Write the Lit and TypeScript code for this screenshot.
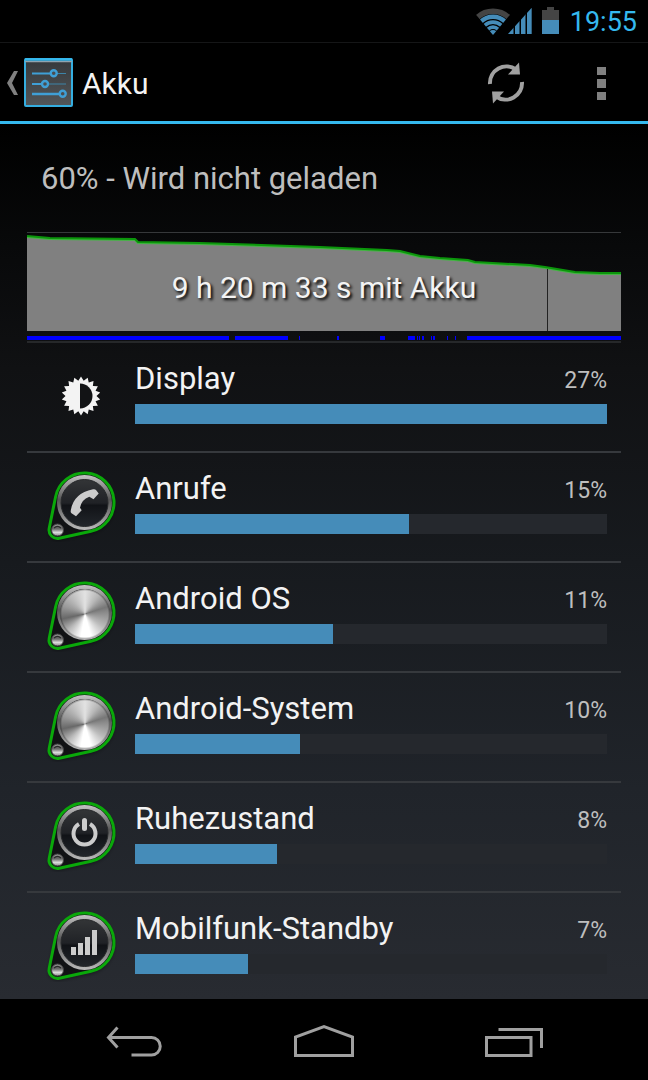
import { LitElement, html, css, svg } from "lit";
import { customElement } from "lit/decorators.js";
import { styleMap } from "lit/directives/style-map.js";

type Glyph = "brightness" | "phone" | "metal" | "power" | "signal";
interface Usage { name: string; percent: number; bar: number; glyph: Glyph }

const USAGE: Usage[] = [
  { name: "Display", percent: 27, bar: 100, glyph: "brightness" },
  { name: "Anrufe", percent: 15, bar: 58, glyph: "phone" },
  { name: "Android OS", percent: 11, bar: 42, glyph: "metal" },
  { name: "Android-System", percent: 10, bar: 35, glyph: "metal" },
  { name: "Ruhezustand", percent: 8, bar: 30, glyph: "power" },
  { name: "Mobilfunk-Standby", percent: 7, bar: 24, glyph: "signal" },
];

// Start and length of each stretch of time the device was awake.
const AWAKE: [number, number][] = [
  [0, 202], [208, 53], [272, 1], [310, 2], [353, 5], [381, 7], [390, 1], [392, 1],
  [395, 2], [404, 1], [406, 2], [420, 1], [428, 1], [440, 154],
];

const LEVEL = "0,3 23,5 108,6 111,9 173,10 293,14 360,17 373,18 393,23 413,25 441,27 448,29 503,32 518,34 548,39 573,40 594,40";

const spikes = (count: number, outer: number, inner: number) =>
  Array.from({ length: count * 2 }, (_, i) => {
    const r = i % 2 ? inner : outer;
    const a = (i * Math.PI) / count;
    return `${(36 + r * Math.sin(a)).toFixed(2)},${(36 - r * Math.cos(a)).toFixed(2)}`;
  }).join(" ");

@customElement("usage-icon")
export class UsageIcon extends LitElement {
  static properties = { glyph: {} };
  declare glyph: Glyph;
  static styles = css`
    :host { display: block; width: 72px; height: 72px; }
    svg { display: block; }
    .metal {
      width: 50px; height: 50px; border-radius: 50%;
      background:
        radial-gradient(circle, transparent 65%, #0006 71%),
        conic-gradient(#e2e2e2, #b8b8b8 35deg, #777 72deg, #8a8a8a 85deg, #bbb 125deg, #fff 165deg, #fff 190deg, #bbb 225deg, #686868 258deg, #999 290deg, #bbb 320deg, #e2e2e2);
    }
  `;
  private face() {
    switch (this.glyph) {
      case "phone":
        return svg`<path fill="#ccc" d="M48 19.300Q50 18.800 51 20L53.700 23.500 48.500 29.300 44.300 26.700Q36.500 29.500 35 37.700L36.700 40.300 31 46.300 26.500 43.300Q25.500 42.500 25.700 41Q28 23.500 48 19.300Z"/>`;
      case "power":
        return svg`<g fill="none" stroke="#ccc" stroke-width="4"><path d="M34 24a11 11 0 1 0 11 0"/><path stroke-width="5" stroke-linecap="round" d="M39.500 20.500v8"/></g>`;
      case "signal":
        return svg`<path fill="#ccc" d="M26 37h5v8h-5zM33 33h5v12h-5zM40 27h5v18h-5zM47 20h5v25h-5z"/>`;
      default:
        return svg`<foreignObject x="14.500" y="8.500" width="50" height="50"><div class="metal"></div></foreignObject>`;
    }
  }
  render() {
    if (this.glyph === "brightness") {
      return html`<svg width="72" height="72" viewBox="0 0 72 72" aria-hidden="true">
        <polygon fill="#f3f3f3" points=${spikes(18, 19.5, 15.5)}></polygon>
        <path fill="#121315" d="M35 23.500a12.500 12.500 0 0 1 0 25z"/>
      </svg>`;
    }
    return html`<svg width="72" height="72" viewBox="0 0 72 72" aria-hidden="true">
      <defs>
        <linearGradient id="rim" x1="0" y1="0" x2="0" y2="1">
          <stop offset="0" stop-color="#c4c4c4"/><stop offset=".45" stop-color="#555"/>
          <stop offset=".6" stop-color="#707070"/><stop offset="1" stop-color="#bbb"/>
        </linearGradient>
        <linearGradient id="face" x1="0" y1="0" x2="0" y2="1">
          <stop offset="0" stop-color="#333537"/><stop offset=".5" stop-color="#202226"/>
          <stop offset=".55" stop-color="#111317"/><stop offset="1" stop-color="#22262b"/>
        </linearGradient>
        <linearGradient id="led" x1="0" y1="0" x2="0" y2="1">
          <stop offset="0" stop-color="#999"/><stop offset=".4" stop-color="#666"/>
          <stop offset=".7" stop-color="#ddd"/><stop offset="1" stop-color="#888"/>
        </linearGradient>
        <filter id="soft" x="-20%" y="-20%" width="140%" height="140%"><feGaussianBlur stdDeviation="2"/></filter>
      </defs>
      <path d="M4.200 60L10.600 28.700A29.500 29.500 0 1 1 45.900 63.300L14.300 70A8.500 8.500 0 0 1 4.200 60Z" fill="#0008" filter="url(#soft)"/>
      <path d="M4.200 58.300L10.600 26.700A29.500 29.500 0 1 1 45.900 61.300L14.300 68.300A8.500 8.500 0 0 1 4.200 58.300Z" fill="#111214" stroke="#0aa80a" stroke-width="3"/>
      <circle cx="39.500" cy="32.500" r="27.500" fill="url(#rim)"/>
      <circle cx="39.500" cy="33" r="23.500" fill="url(#face)" stroke="#26282a"/>
      ${this.face()}
      <circle cx="12.500" cy="60" r="6" fill="url(#led)" stroke="#444"/>
      <path d="M9 58q3.500-3 7 0" fill="none" stroke="#2c2c2c" stroke-width="1.500"/>
    </svg>`;
  }
}

@customElement("app-root")
export class AppRoot extends LitElement {
  static styles = css`
    :host {
      display: flex; flex-direction: column; height: 100vh; overflow: hidden;
      font-family: Roboto, "Noto Sans", sans-serif; color: #f3f3f3; background: #000;
    }
    * { box-sizing: border-box; }
    svg { display: block; }
    button { background: none; border: 0; padding: 0; margin: 0; color: inherit; font: inherit; display: flex; align-items: center; justify-content: center; }
    .status { flex: none; height: 43px; display: flex; align-items: center; justify-content: flex-end; padding-right: 11px; gap: 10px; border-bottom: 1px solid #151617; }
    .time { font-size: 27px; line-height: 42px; padding-top: 2px; color: #35b9ee; }
    .bar { flex: none; height: 81px; display: flex; align-items: center; border-bottom: 3px solid #35b9ee; }
    .up { gap: 5px; padding-left: 6px; }
    h1 { margin: 0 0 0 9px; flex: 1; padding-top: 4px; font-size: 30px; line-height: 40px; font-weight: 400; }
    .action { width: 94px; height: 78px; }
    main { flex: 1; min-height: 0; overflow: hidden; padding: 0 27px; background: linear-gradient(#000 0, #08090a 14%, #101113 28%, #171a1e 50%, #20242a 76%, #282b31 100%); }
    .summary { margin: 0; padding: 35px 14px 33px; font-size: 31px; line-height: 40px; color: #bebebe; }
    .history { display: grid; border-top: 1px solid #36383a; border-bottom: 2px solid #26282a; height: 111px; }
    .history > * { grid-area: 1 / 1; }
    .plot { width: 100%; height: 108px; }
    .caption { align-self: start; justify-self: center; margin: 0; padding-top: 35px; font-size: 30px; line-height: 40px; text-shadow: 2px 2px 3px #000; }
    ul { margin: 0; padding: 0; list-style: none; }
    li { display: flex; height: 110px; padding: 17px 14px 0 18px; border-bottom: 2px solid #36393d; }
    .body { flex: 1; margin-left: 18px; }
    .line { display: flex; justify-content: space-between; height: 44px; }
    .name { font-size: 31px; line-height: 38px; }
    .pct { font-size: 23px; line-height: 42px; color: #bebebe; }
    .track { height: 20px; background: #25282d; }
    .fill { height: 20px; background: #458cb9; }
    nav { flex: none; height: 81px; display: flex; padding: 5px 39px 0; background: #000; }
    nav button { flex: 1; }
  `;
  private statusIcons() {
    return html`<svg width="84" height="28" viewBox="0 0 84 28" aria-hidden="true">
      <defs>
        <clipPath id="cone"><path d="M17 28L-1.500 6V0h37v6z"/></clipPath>
        <clipPath id="ramp"><path d="M32 27L55.700.8V27z"/></clipPath>
      </defs>
      <g clip-path="url(#cone)" fill="none">
        <circle cx="17" cy="27" r="22.800" stroke="#444" stroke-width="5.500"/>
        <g stroke="#458cb9">
          <circle cx="17" cy="27" r="17.300" stroke-width="4.500"/>
          <circle cx="17" cy="27" r="11.900" stroke-width="3.600"/>
          <circle cx="17" cy="27" r="6.900" stroke-width="3.600"/>
        </g>
        <circle cx="17" cy="27" r="4" fill="#458cb9"/>
      </g>
      <path clip-path="url(#ramp)" fill="#458cb9" d="M32 0h5.500v27H32zM39 0h4.500v27H39zM45 0h4.500v27H45zM51 0h5v27h-5z"/>
      <path fill="#444" d="M71 0h7v3h5v10H66V3h5z"/>
      <path fill="#458cb9" d="M66 13h17v14H66z"/>
    </svg>`;
  }
  private settingsIcon() {
    return html`<svg width="49" height="49" viewBox="0 0 49 49" aria-hidden="true">
      <defs><linearGradient id="plate" x1="0" y1="0" x2="0" y2="1"><stop offset="0" stop-color="#35383b"/><stop offset="1" stop-color="#53575a"/></linearGradient></defs>
      <rect x="1" y="1" width="47" height="47" rx="1" fill="url(#plate)" stroke="#35aee0" stroke-width="2"/>
      <path d="M1 3.500h47" stroke="#8fa4b0" stroke-width="1.500"/>
      <path d="M1 1.500h47" stroke="#35b9ee" stroke-width="2.500"/>
      <g stroke="#3d84a8" stroke-width="1.200"><path d="M30 15.500h12M21 26h21"/></g>
      <g stroke="#3f9fd6" stroke-width="2" fill="#4a4d50">
        <path d="M8 15.500h19M8 26h10"/><path stroke-width="2.500" d="M8 36h28"/>
        <g stroke-width="2.400"><circle cx="29.700" cy="15.200" r="3"/><circle cx="21" cy="26" r="3"/><circle cx="38.700" cy="35.700" r="3"/></g>
      </g>
    </svg>`;
  }
  render() {
    return html`
      <div class="status">${this.statusIcons()}<span class="time">19:55</span></div>
      <header class="bar">
        <button class="up" aria-label="Nach oben">
          <svg width="13" height="26" viewBox="0 0 13 26"><path fill="#808080" d="M8 2h4L6 14l6 12H8L1 14z"/></svg>
          ${this.settingsIcon()}
        </button>
        <h1>Akku</h1>
        <button class="action" aria-label="Aktualisieren">
          <svg width="50" height="50" viewBox="0 0 50 50">
            <g id="arrow"><path fill="none" stroke="#a0a0a0" stroke-width="4" d="M8 27A16.500 16.500 0 0 1 34 12.500"/><path fill="#a0a0a0" d="M37 5.500L38 17.500H26z"/></g>
            <g transform="rotate(180 24 26)"><path fill="none" stroke="#a0a0a0" stroke-width="4" d="M8 27A16.500 16.500 0 0 1 34 12.500"/><path fill="#a0a0a0" d="M37 5.500L38 17.500H26z"/></g>
          </svg>
        </button>
        <button class="action" aria-label="Weitere Optionen">
          <svg width="9" height="36" viewBox="0 0 9 36"><path fill="#808080" d="M0 3h9v8H0zM0 15h9v9H0zM0 28h9v8H0z"/></svg>
        </button>
      </header>
      <main>
        <p class="summary">60% - Wird nicht geladen</p>
        <div class="history">
          <svg class="plot" viewBox="0 0 594 108" preserveAspectRatio="none" aria-hidden="true">
            <polygon fill="#808080" points="${LEVEL} 594,98 0,98"></polygon>
            <polyline fill="none" stroke="#45b445" stroke-width="2" transform="translate(0 1)" points=${LEVEL}></polyline>
            <polyline fill="none" stroke="#0b960b" stroke-width="2" points=${LEVEL}></polyline>
            <path stroke="#222" d="M520.500 36v62"/>
            ${AWAKE.map(([x, w]) => svg`<rect x=${x} y="103" width=${w} height="4" fill="#00f"/>`)}
          </svg>
          <p class="caption">9 h 20 m 33 s mit Akku</p>
        </div>
        <ul>
          ${USAGE.map((u) => html`<li>
            <usage-icon .glyph=${u.glyph}></usage-icon>
            <div class="body">
              <div class="line"><span class="name">${u.name}</span><span class="pct">${u.percent}%</span></div>
              <div class="track"><div class="fill" style=${styleMap({ width: `${u.bar}%` })}></div></div>
            </div>
          </li>`)}
        </ul>
      </main>
      <nav>
        <button aria-label="Zurück">
          <svg width="56" height="34" viewBox="0 0 56 34" fill="none" stroke="#a0a0a0" stroke-width="3"><path d="M11.500 2.500L2.500 12.500 11.500 22.500M3 12.500H45.500A8.700 8.700 0 0 1 45.500 30H25.500"/></svg>
        </button>
        <button aria-label="Startseite">
          <svg width="62" height="34" viewBox="0 0 62 34" fill="none" stroke="#a0a0a0" stroke-width="3"><path d="M2.500 30.500V12L31 1.600 59.500 12V30.500Z"/></svg>
        </button>
        <button aria-label="Letzte Apps">
          <svg width="58" height="34" viewBox="0 0 58 34" fill="none" stroke="#a0a0a0" stroke-width="3"><path d="M1.500 12.500H46V30.500H1.500ZM13.500 4.500H56.500V23"/></svg>
        </button>
      </nav>
    `;
  }
}
